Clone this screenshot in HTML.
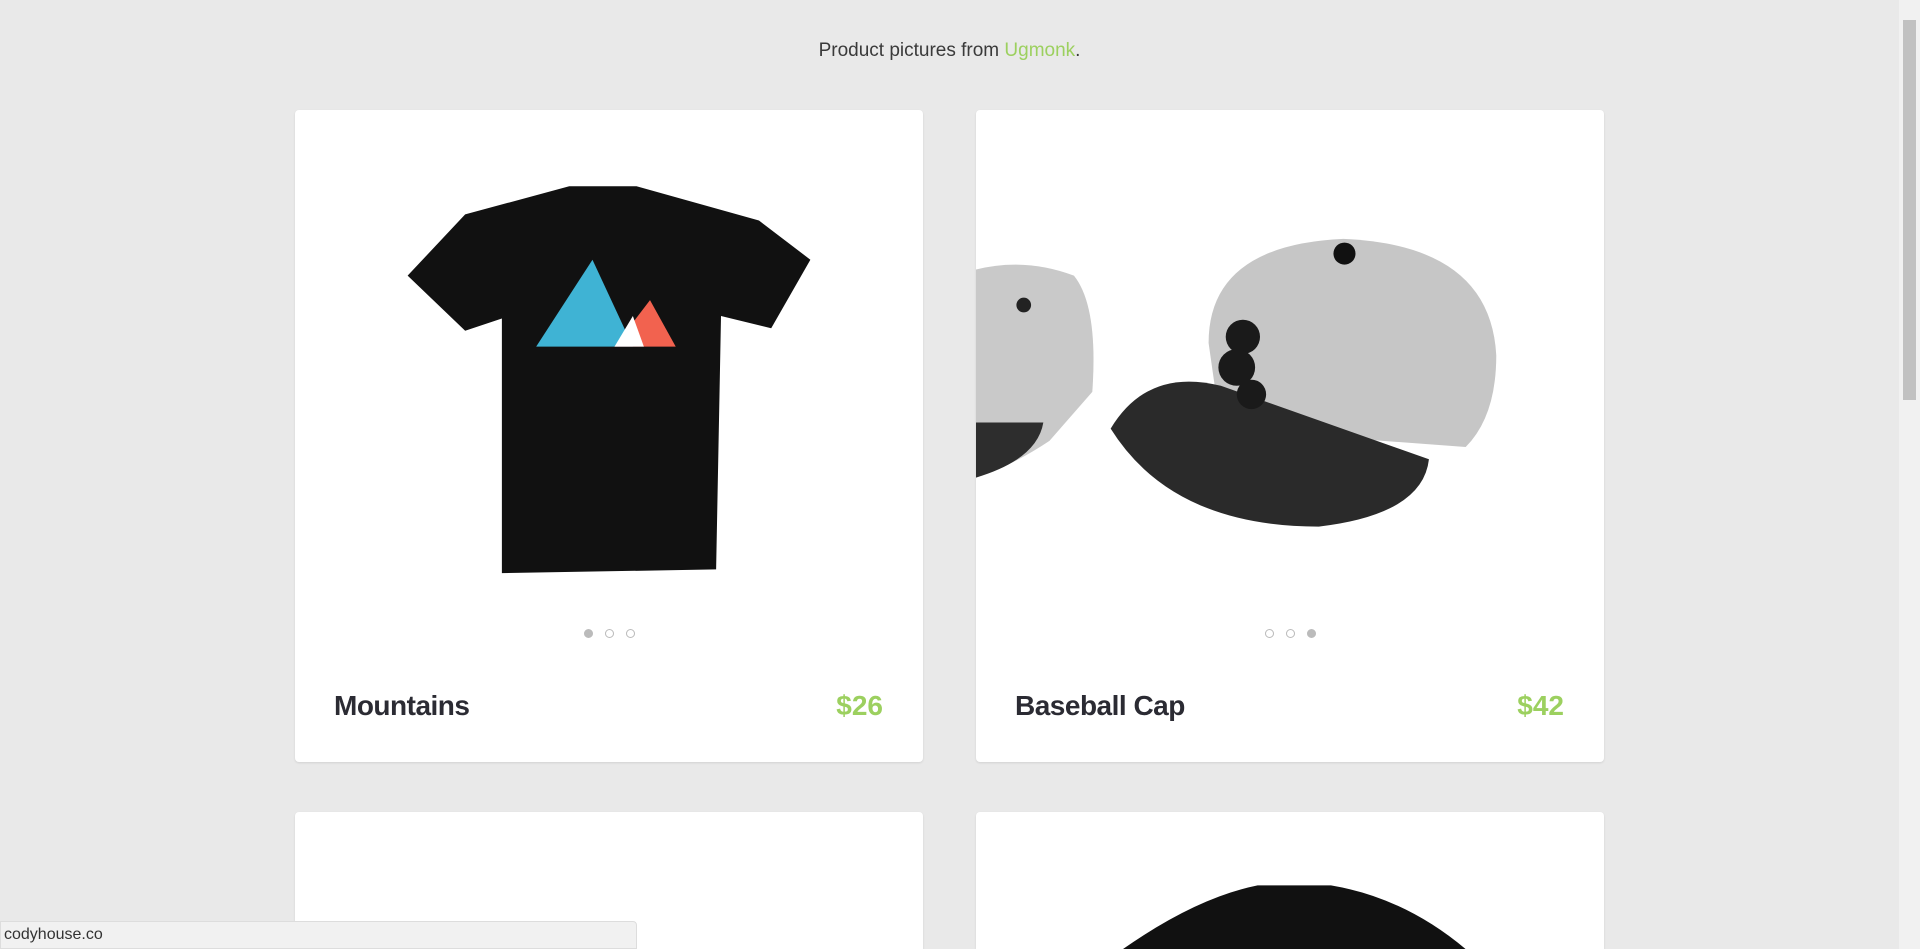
<!DOCTYPE html>
<html><head><meta charset="utf-8"><style>
html,body{margin:0;padding:0;overflow:hidden;height:949px;}
body{width:1920px;background:#e9e9e9;font-family:"Liberation Sans",sans-serif;position:relative;}
.hdr{position:absolute;top:40px;left:0;width:1899px;text-align:center;font-size:19px;color:#3a3a3a;}
.hdr span{color:#9cd05f;}
.card{position:absolute;width:628px;height:652px;background:#fff;border-radius:4px;box-shadow:0 1px 2px rgba(0,0,0,.1);overflow:hidden;}
.card svg{position:absolute;left:0;top:0;}
.dots{position:absolute;top:519px;left:0;width:100%;text-align:center;font-size:0;}
.dots i{display:inline-block;width:9px;height:9px;border:1px solid #bbb;border-radius:50%;margin:0 6px;box-sizing:border-box;}
.dots i.on{background:#bbb;}
.t{position:absolute;top:580px;left:39px;font-size:28px;font-weight:bold;color:#2b2b33;letter-spacing:-0.5px;}
.p{position:absolute;top:580px;right:40px;font-size:28px;font-weight:bold;color:#9cd05f;}
.sb{position:absolute;right:0;top:0;width:21px;height:949px;background:#f1f1f1;}
.sb div{position:absolute;left:4px;top:20px;width:13px;height:380px;background:#c1c1c1;}
.status{position:absolute;left:0;top:921px;width:637px;height:28px;background:#f1f1f1;border:1px solid #ddd;border-radius:0 4px 0 0;font-size:16px;color:#333;line-height:26px;padding-left:3px;box-sizing:border-box;}
</style></head><body>
<div class="hdr">Product pictures from <span>Ugmonk</span>.</div>

<div class="card" style="left:295px;top:110px">
<svg width="628" height="652" viewBox="0 0 513 532">
<polygon points="224,62 279,62 379,90 421,122 389,178 348,168 344,375 169,378 169,170 139,180 92,135 139,85" fill="#111"/>
<polygon points="197,193 243,122 276,193" fill="#3fb3d4"/>
<polygon points="261,193 290,155 311,193" fill="#f2624f"/>
<polygon points="261,193 276,168 285,193" fill="#fff"/>
</svg>
<div class="dots"><i class="on"></i><i></i><i></i></div>
<div class="t">Mountains</div><div class="p">$26</div>
</div>

<div class="card" style="left:976px;top:110px">
<svg width="628" height="652" viewBox="0 0 513 532">
<path d="M0,130 Q40,120 80,135 Q100,160 95,230 L60,270 Q30,290 0,300 Z" fill="#c9c9c9"/>
<path d="M0,255 L55,255 Q50,285 0,300 Z" fill="#2d2d2d"/>
<circle cx="39" cy="159" r="6" fill="#222"/>
<path d="M190,190 Q190,110 300,105 Q420,110 425,200 Q425,250 400,275 L200,260 Z" fill="#c6c6c6"/>
<path d="M110,260 Q140,210 200,225 L370,285 Q365,330 280,340 Q160,340 110,260 Z" fill="#2a2a2a"/>
<circle cx="301" cy="117" r="9" fill="#111"/>
<circle cx="218" cy="185" r="14" fill="#1a1a1a"/><circle cx="213" cy="210" r="15" fill="#1a1a1a"/><circle cx="225" cy="232" r="12" fill="#1a1a1a"/>
</svg>
<div class="dots"><i></i><i></i><i class="on"></i></div>
<div class="t">Baseball Cap</div><div class="p">$42</div>
</div>

<div class="card" style="left:295px;top:812px;height:137px;border-radius:4px 4px 0 0"></div>
<div class="card" style="left:976px;top:812px;height:137px;border-radius:4px 4px 0 0">
<svg width="628" height="137" viewBox="0 0 513 112">
<path d="M120,112 Q180,70 230,60 L290,60 Q350,70 400,112 Z" fill="#111"/>
</svg>
</div>

<div class="sb"><div></div></div>
<div class="status">codyhouse.co</div>
</body></html>
